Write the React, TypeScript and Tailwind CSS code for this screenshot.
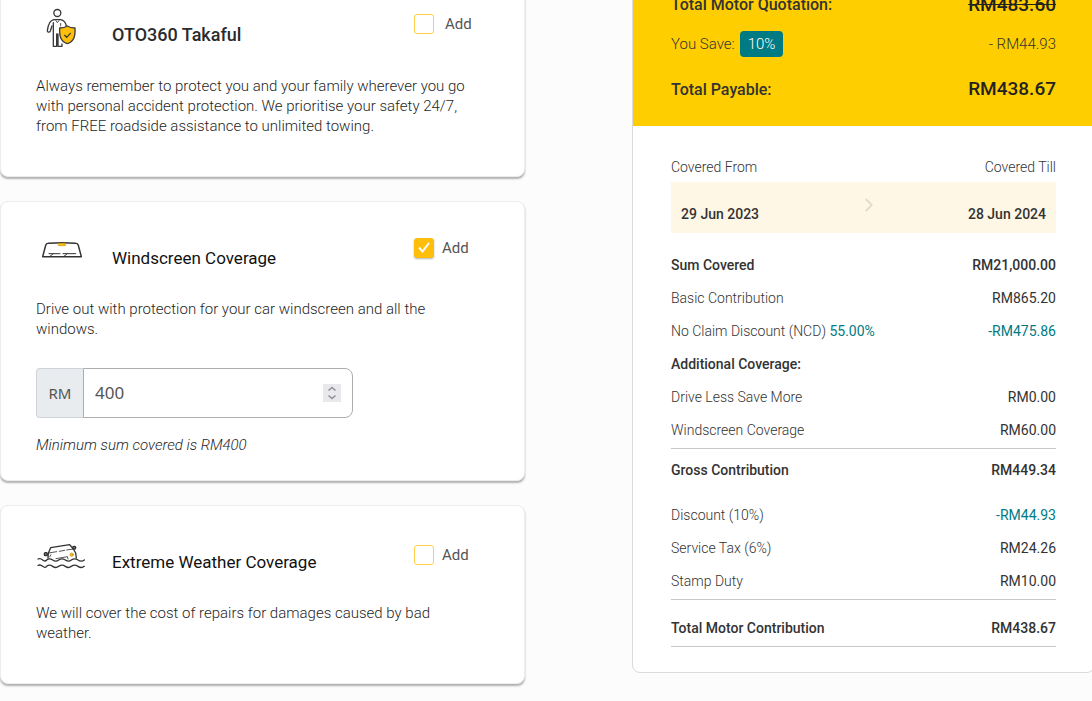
import { useState, type ReactNode } from "react";
import { ChevronRight } from "lucide-react";

function TakafulIcon() {
  return (
    <svg viewBox="18 12 150 144" className="h-12 w-[50px]" fill="none" stroke="#3a3a3a" strokeWidth="4" strokeLinecap="round" strokeLinejoin="round" aria-hidden="true">
      <circle cx="82" cy="39" r="10.5" />
      <path d="M72 59 C60 60 55 70 52 92 C52 97 59 98 61 93 L66 78" />
      <path d="M72 59 H92 C102 61 107 68 109 78" />
      <path d="M70 68 V139 H80 V102 M84 102 V139 H96 V132" />
      <path d="M78 62 L82 68 L87 62 M92 70 V78" strokeWidth="2.5" />
      <path d="M112 78 C105 83 97 84 89 84 C88 108 91 124 112 131 C133 124 136 108 135 84 C127 84 119 83 112 78Z" fill="#ffbe0b" />
      <path d="M104 106 L110 112 L121 100" />
    </svg>
  );
}

function WindscreenIcon() {
  return (
    <svg viewBox="18 -9 150 144" className="h-12 w-[50px]" fill="none" stroke="#333" strokeWidth="4.5" strokeLinecap="round" strokeLinejoin="round" aria-hidden="true">
      <path d="M38 80 L47 46 Q49 40 55 40 Q96 37 137 40 Q143 40 145 46 L154 80 Z" />
      <rect x="86" y="40" width="20" height="7" fill="#ffbe0b" strokeWidth="2" stroke="#c79410" />
      <path d="M57 71 H90 M61 78 L70 71 M99 71 H137 M103 78 L112 71" strokeWidth="3" />
    </svg>
  );
}

function WeatherIcon() {
  return (
    <svg viewBox="18 -12 150 144" className="h-12 w-[50px]" fill="none" stroke="#333" strokeWidth="4" strokeLinecap="round" strokeLinejoin="round" aria-hidden="true">
      <path d="M54 69 L55 55 L62 38 L119 29 L130 42 L137 54 L139 69" />
      <path d="M56 54 L80 50 M88 49 L104 46 M110 45 L130 42" strokeWidth="2.5" />
      <path d="M78 71 L112 65 L114 72 M63 59 L59 66" strokeWidth="2.5" />
      <rect x="43" y="53" width="9" height="9" rx="3" fill="#777" />
      <rect x="128" y="34" width="9" height="8" rx="3" fill="#777" />
      <circle cx="125" cy="59" r="5" fill="#ffbe0b" stroke="#b58a16" strokeWidth="2" />
      <path d="M24 72 Q31 69 38 75 T50 75 Q58 68 68 75 T86 75 Q96 68 106 75 T124 75 Q134 68 144 75 T163 75" />
      <path d="M24 91 Q31 88 38 94 T50 94 Q58 87 68 94 T86 94 Q96 87 106 94 T124 94 Q134 87 144 94 T163 94" />
    </svg>
  );
}

type CoverageProps = {
  id: string;
  icon: ReactNode;
  title: string;
  titleClass: string;
  labelClass: string;
  description: string;
  initial?: boolean;
  children?: ReactNode;
};

function CoverageCard({ id, icon, title, titleClass, labelClass, description, initial = false, children }: CoverageProps) {
  const [checked, setChecked] = useState(initial);
  return (
    <section className="rounded-lg border border-[#ececec] bg-white px-[35px] pt-[25px] pb-10 shadow-[0_2px_2px_rgba(0,0,0,0.3)]">
      <div className="flex items-start">
        <div className="shrink-0">{icon}</div>
        <h2 className={`mt-[19px] ml-[26px] flex-1 leading-6 ${titleClass}`}>{title}</h2>
        <label htmlFor={id} className={`flex w-[75px] shrink-0 items-center text-[15px] leading-5 text-[#555] ${labelClass}`}>
          <span className="grid size-5 place-items-center">
            <input
              id={id}
              type="checkbox"
              checked={checked}
              onChange={(e) => setChecked(e.target.checked)}
              className="col-start-1 row-start-1 size-5 appearance-none rounded-[3px] border border-[#ffcf4a] bg-white checked:border-[#ffbe0b] checked:bg-[#ffbe0b] checked:shadow-[0_1px_2px_rgba(0,0,0,0.3)]"
            />
            {checked && (
              <svg viewBox="0 0 20 20" className="pointer-events-none col-start-1 row-start-1 size-5" fill="none" stroke="#fff" strokeWidth="2" aria-hidden="true">
                <path d="M5 9.5 L8.5 13.5 L15 5" />
              </svg>
            )}
          </span>
          Add
        </label>
      </div>
      <p className="mt-6 text-[15px] leading-5 font-light text-[#1f1f1f]">{description}</p>
      {children}
    </section>
  );
}

function SumCoveredField() {
  const [amount, setAmount] = useState(400);
  return (
    <>
      <div className="mt-[29px] flex h-[50px] max-w-[317px] font-['Noto_Sans',sans-serif] text-[#555]">
        <label htmlFor="sum-covered" className="flex w-[47px] shrink-0 items-center justify-center rounded-l-[4px] border border-r-0 border-[#ced4da] bg-[#e9ecef] text-[15px]">
          RM
        </label>
        <div className="flex min-w-0 flex-1 items-center rounded-r-lg border border-[#adadad] px-[11px]">
          <input
            id="sum-covered"
            type="number"
            min={400}
            value={amount}
            onChange={(e) => setAmount(Number(e.target.value))}
            className="min-w-0 flex-1 [appearance:textfield] bg-transparent text-[17px] outline-none"
          />
          <div className="flex shrink-0 flex-col bg-[#e9e9ed] text-[#8f8f9d]">
            <button type="button" aria-label="Increase" onClick={() => setAmount(amount + 1)} className="h-[9px] w-[18px]">
              <svg viewBox="0 0 18 9" className="block h-[9px] w-[18px]" fill="none" stroke="currentColor" strokeWidth="1.6">
                <path d="M5.5 6.5 L9 3.5 L12.5 6.5" />
              </svg>
            </button>
            <button type="button" aria-label="Decrease" onClick={() => setAmount(Math.max(400, amount - 1))} className="h-[9px] w-[18px]">
              <svg viewBox="0 0 18 9" className="block h-[9px] w-[18px]" fill="none" stroke="currentColor" strokeWidth="1.6">
                <path d="M5.5 2.5 L9 5.5 L12.5 2.5" />
              </svg>
            </button>
          </div>
        </div>
      </div>
      <p className="mt-[17px] -mb-[15px] text-[15px] leading-5 font-light text-[#1f1f1f] italic">Minimum sum covered is RM400</p>
    </>
  );
}

type Row = { label: string; note?: string; value?: string; kind: "strong" | "normal" | "saving"; pad: string };

const rows: Row[] = [
  { label: "Sum Covered", value: "RM21,000.00", kind: "strong", pad: "py-1.5" },
  { label: "Basic Contribution", value: "RM865.20", kind: "normal", pad: "py-1.5" },
  { label: "No Claim Discount (NCD)", note: "55.00%", value: "-RM475.86", kind: "saving", pad: "py-1.5" },
  { label: "Additional Coverage:", kind: "strong", pad: "py-1.5" },
  { label: "Drive Less Save More", value: "RM0.00", kind: "normal", pad: "py-1.5" },
  { label: "Windscreen Coverage", value: "RM60.00", kind: "normal", pad: "pt-1.5 pb-[7px] border-b" },
  { label: "Gross Contribution", value: "RM449.34", kind: "strong", pad: "pt-[11px] pb-[18px]" },
  { label: "Discount (10%)", value: "-RM44.93", kind: "saving", pad: "py-1.5" },
  { label: "Service Tax (6%)", value: "RM24.26", kind: "normal", pad: "py-1.5" },
  { label: "Stamp Duty", value: "RM10.00", kind: "normal", pad: "pt-1.5 pb-[7px] border-b" },
  { label: "Total Motor Contribution", value: "RM438.67", kind: "strong", pad: "pt-[18px] pb-[7px] border-b" },
];

const labelStyle = { strong: "font-medium", normal: "font-light", saving: "font-light" };
const valueStyle = { strong: "font-medium", normal: "font-normal", saving: "font-normal text-[#007b84]" };

function Summary() {
  return (
    <aside className="-mt-5 overflow-hidden rounded-lg border border-[#dadada] bg-white text-[#333]">
      <div className="bg-[#ffce00] px-[38px] pt-3 pb-[25px]">
        <div className="flex h-6 items-center justify-between">
          <span className="text-[16px] font-medium">Total Motor Quotation:</span>
          <s className="text-[19px] font-medium text-[#222]">RM483.60</s>
        </div>
        <div className="mt-3.5 flex h-[26px] items-center justify-between text-[15px] font-light">
          <span className="flex items-center gap-[5px]">
            You Save: <span className="rounded-[4px] bg-[#007b84] px-2 leading-[26px] text-white">10%</span>
          </span>
          <span>- RM44.93</span>
        </div>
        <div className="mt-5 flex h-6 items-end justify-between">
          <span className="text-[16px] leading-[22px] font-medium">Total Payable:</span>
          <span className="text-[19px] leading-6 font-medium text-[#222]">RM438.67</span>
        </div>
      </div>
      <div className="px-[38px] pt-[31px] pb-[25px] text-[14px] leading-[21px]">
        <div className="flex justify-between font-light">
          <span>Covered From</span>
          <span>Covered Till</span>
        </div>
        <div className="mt-1 flex justify-between bg-[#fff7e6] px-2.5 pt-[22px] pb-2 font-medium">
          <span>29 Jun 2023</span>
          <ChevronRight className="-mt-2.5 ml-2.5 size-[22px] text-[#e3dccc]" strokeWidth={2} aria-hidden="true" />
          <span>28 Jun 2024</span>
        </div>
        <table className="mt-4 w-full border-separate border-spacing-0">
          <tbody>
            {rows.map((r) => (
              <tr key={r.label}>
                <th scope="row" className={`border-[#c8c8c8] text-left ${labelStyle[r.kind]} ${r.pad}`}>
                  {r.label}
                  {r.note && <span className="font-normal text-[#007b84]"> {r.note}</span>}
                </th>
                <td className={`border-[#c8c8c8] text-right ${valueStyle[r.kind]} ${r.pad}`}>{r.value}</td>
              </tr>
            ))}
          </tbody>
        </table>
      </div>
    </aside>
  );
}

export default function App() {
  return (
    <div className="min-h-screen overflow-hidden bg-[#fcfcfc] font-[Roboto,sans-serif]">
      <div className="-mr-[3px] grid grid-cols-[525fr_463fr] items-start gap-[107px]">
        <main className="-mt-[22px] flex flex-col gap-6">
          <CoverageCard
            id="takaful"
            icon={<TakafulIcon />}
            title="OTO360 Takaful"
            titleClass="text-[18px] font-medium text-[#2b2b2b]"
            labelClass="mt-2.5 gap-[11px]"
            description="Always remember to protect you and your family wherever you go with personal accident protection. We prioritise your safety 24/7, from FREE roadside assistance to unlimited towing."
          />
          <CoverageCard
            id="windscreen"
            icon={<WindscreenIcon />}
            title="Windscreen Coverage"
            titleClass="text-[17px] font-normal text-[#111]"
            labelClass="mt-[11px] gap-2"
            description="Drive out with protection for your car windscreen and all the windows."
            initial
          >
            <SumCoveredField />
          </CoverageCard>
          <CoverageCard
            id="weather"
            icon={<WeatherIcon />}
            title="Extreme Weather Coverage"
            titleClass="text-[17px] font-normal text-[#111]"
            labelClass="mt-3.5 gap-2"
            description="We will cover the cost of repairs for damages caused by bad weather."
          />
        </main>
        <Summary />
      </div>
    </div>
  );
}
